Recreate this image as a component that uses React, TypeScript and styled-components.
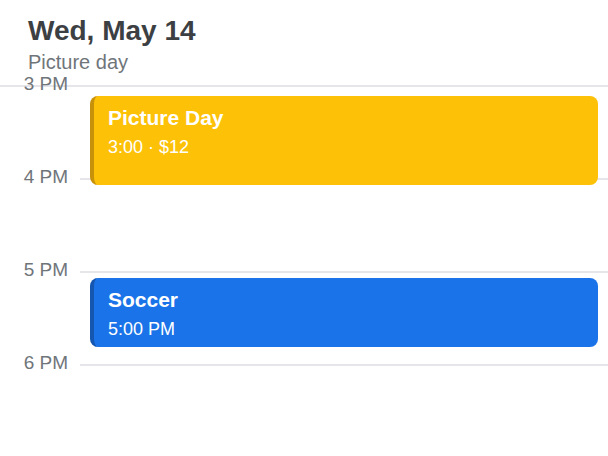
import styled, { createGlobalStyle } from 'styled-components';

const HOUR_HEIGHT = 93;

interface CalendarEvent {
  title: string;
  detail: string;
  top: number;
  height: number;
  color: string;
  edge: string;
}

const hours = ['3 PM', '4 PM', '5 PM', '6 PM'];

const events: CalendarEvent[] = [
  { title: 'Picture Day', detail: '3:00 · $12', top: 11, height: 89, color: '#fdc107', edge: '#c8910a' },
  { title: 'Soccer', detail: '5:00 PM', top: 2 * HOUR_HEIGHT + 7, height: 69, color: '#1a73e8', edge: '#1557b0' },
];

const DayView = () => {
  return (
    <St.Page>
      <St.Header>
        <St.DateTitle>Wed, May 14</St.DateTitle>
        <St.DaySubtitle>Picture day</St.DaySubtitle>
      </St.Header>
      <St.Timeline>
        {hours.map((hour) => (
          <St.HourRow key={hour}>
            <St.HourLabel>{hour}</St.HourLabel>
            <St.HourSlot />
          </St.HourRow>
        ))}
        <St.EventLayer>
          {events.map((ev) => (
            <St.EventCard
              key={ev.title}
              $color={ev.color}
              $edge={ev.edge}
              style={{ top: ev.top, height: ev.height }}
            >
              <St.EventTitle>{ev.title}</St.EventTitle>
              <St.EventDetail>{ev.detail}</St.EventDetail>
            </St.EventCard>
          ))}
        </St.EventLayer>
      </St.Timeline>
    </St.Page>
  );
};

const GlobalStyle = createGlobalStyle`
  body {
    margin: 0;
    background: #ffffff;
    font-family: 'Liberation Sans', Arial, sans-serif;
  }
`;

export default function App() {
  return (
    <>
      <GlobalStyle />
      <DayView />
    </>
  );
}

const St = {
  Page: styled.div`
    width: 608px;
    height: 456px;
    overflow: hidden;
    background: #ffffff;
  `,
  Header: styled.header`
    height: 87px;
    box-sizing: border-box;
    padding: 15px 28px 0;
    border-bottom: 2px solid #e6e6ea;
  `,
  DateTitle: styled.h1`
    margin: 0;
    font-size: 28px;
    line-height: 32px;
    font-weight: 700;
    color: #3c4043;
  `,
  DaySubtitle: styled.div`
    margin-top: 4px;
    font-size: 20px;
    line-height: 22px;
    color: #70757a;
  `,
  Timeline: styled.div`
    position: relative;
    margin-top: -2px;
  `,
  HourRow: styled.div`
    display: grid;
    grid-template-columns: 80px 1fr;
    height: ${HOUR_HEIGHT}px;
  `,
  HourLabel: styled.span`
    box-sizing: border-box;
    padding-right: 12px;
    text-align: right;
    font-size: 19px;
    line-height: 20px;
    color: #70757a;
    transform: translateY(-11px);
  `,
  HourSlot: styled.div`
    border-top: 2px solid #e6e6ea;
  `,
  EventLayer: styled.div`
    position: absolute;
    top: 0;
    left: 80px;
    right: 0;
    bottom: 0;
  `,
  EventCard: styled.div<{ $color: string; $edge: string }>`
    position: absolute;
    left: 10px;
    right: 10px;
    box-sizing: border-box;
    padding: 10px 14px 0;
    border-radius: 8px;
    border-left: 4px solid ${({ $edge }) => $edge};
    background: ${({ $color }) => $color};
    color: #ffffff;
  `,
  EventTitle: styled.div`
    font-size: 21px;
    line-height: 24px;
    font-weight: 700;
  `,
  EventDetail: styled.div`
    margin-top: 6px;
    font-size: 18px;
    line-height: 22px;
  `,
};
